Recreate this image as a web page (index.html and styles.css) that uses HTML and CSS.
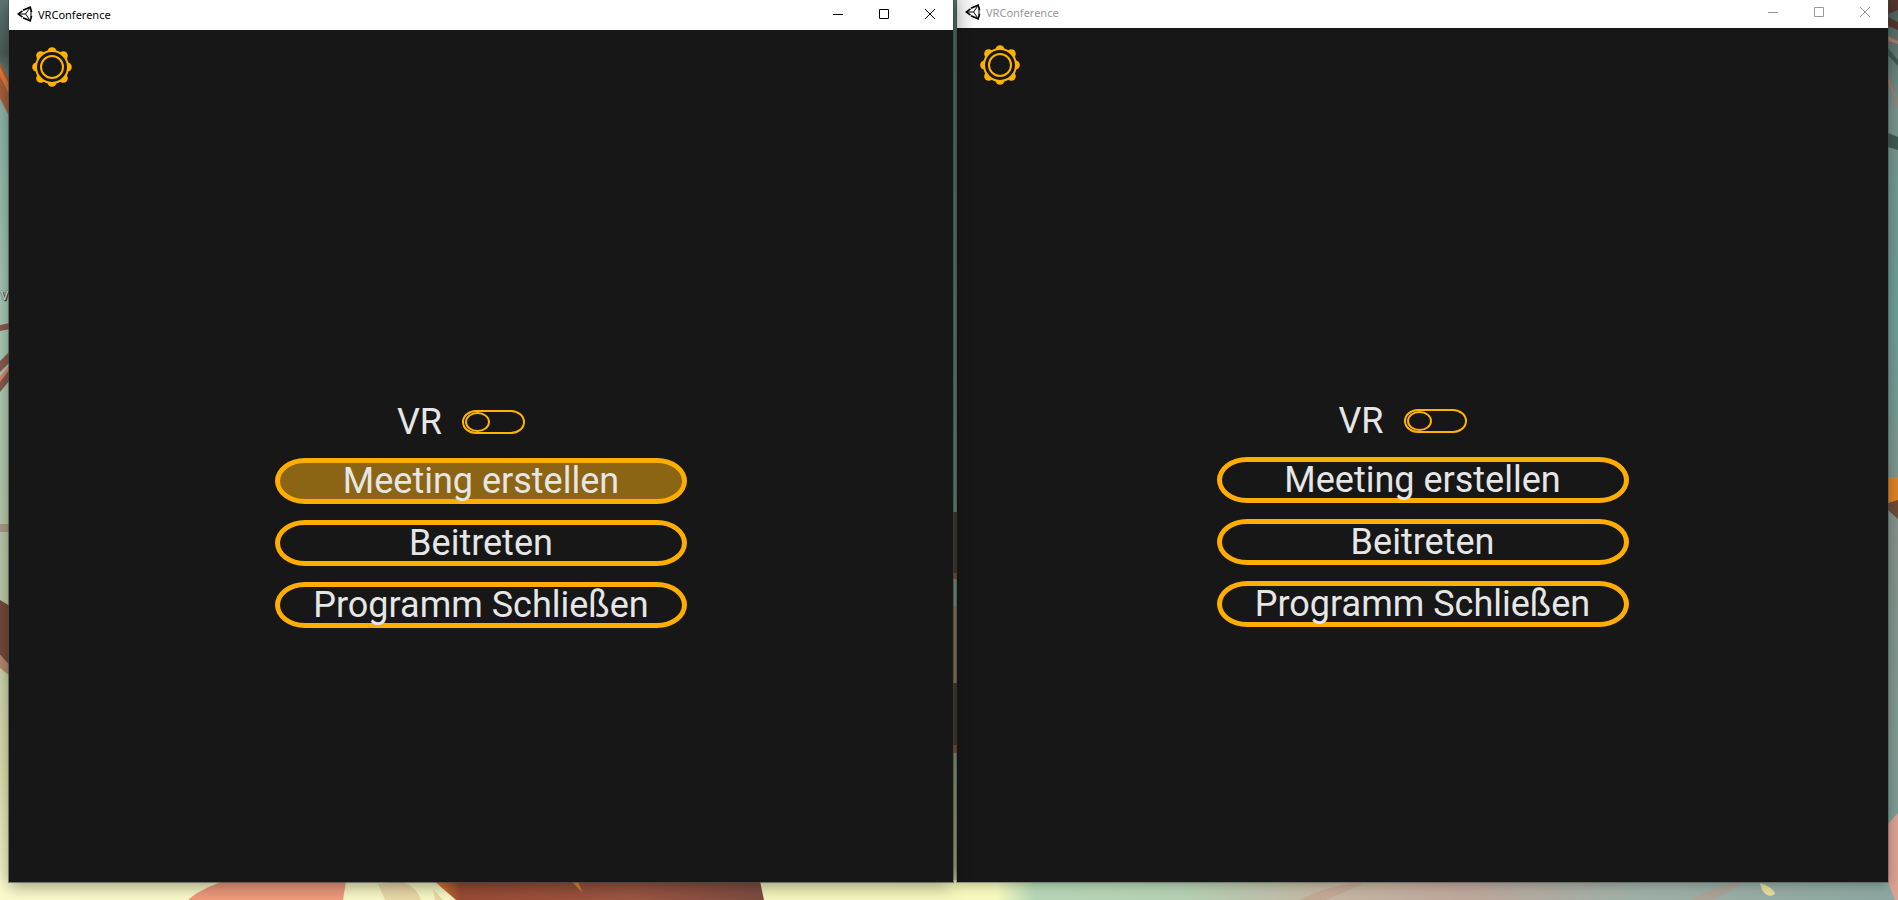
FILE: index.html
```html
<!DOCTYPE html>
<html lang="de">
<head>
<meta charset="utf-8">
<title>VRConference</title>
<link rel="stylesheet" href="styles.css">
</head>
<body>
<svg class="wallpaper" viewBox="0 0 1898 900" preserveAspectRatio="none" aria-hidden="true">
  <defs>
    <linearGradient id="skyLeft" x1="0" y1="0" x2="0" y2="1">
      <stop offset="0" stop-color="#5d7772"/><stop offset="0.06" stop-color="#4d5d58"/>
      <stop offset="0.12" stop-color="#8fb5aa"/><stop offset="0.35" stop-color="#a9cbb5"/>
      <stop offset="0.65" stop-color="#bdcbaa"/><stop offset="0.85" stop-color="#dfdfb0"/>
      <stop offset="1" stop-color="#fbfbce"/>
    </linearGradient>
    <linearGradient id="skyMid" x1="0" y1="0" x2="0" y2="1">
      <stop offset="0" stop-color="#56776f"/><stop offset="0.5" stop-color="#6f8f83"/>
      <stop offset="0.83" stop-color="#8c9c7f"/><stop offset="0.96" stop-color="#b5b184"/>
      <stop offset="1" stop-color="#f4f5c0"/>
    </linearGradient>
    <linearGradient id="skyRight" x1="0" y1="0" x2="0" y2="1">
      <stop offset="0" stop-color="#4a5c58"/><stop offset="0.12" stop-color="#76908a"/>
      <stop offset="0.35" stop-color="#6b9d96"/><stop offset="0.6" stop-color="#83908a"/>
      <stop offset="0.9" stop-color="#7c9c93"/><stop offset="1" stop-color="#a9a79b"/>
    </linearGradient>
    <linearGradient id="ground" x1="0" y1="0" x2="1" y2="0">
      <stop offset="0" stop-color="#fbfbce"/><stop offset="0.525" stop-color="#f6f8bd"/>
      <stop offset="0.545" stop-color="#b5d6b5"/><stop offset="0.62" stop-color="#b4d0b4"/>
      <stop offset="0.7" stop-color="#c3b6a1"/><stop offset="0.77" stop-color="#bea69b"/>
      <stop offset="0.86" stop-color="#9fb0a6"/><stop offset="1" stop-color="#8aa7a0"/>
    </linearGradient>
    <linearGradient id="trunk" x1="0" y1="0" x2="1" y2="0">
      <stop offset="0" stop-color="#ee8434"/><stop offset="0.08" stop-color="#9b4c35"/>
      <stop offset="0.6" stop-color="#9c5643"/><stop offset="1" stop-color="#7e4e41"/>
    </linearGradient>
  </defs>
  <rect width="20" height="900" fill="url(#skyLeft)"/>
  <rect x="940" width="30" height="900" fill="url(#skyMid)"/>
  <rect x="1880" width="18" height="900" fill="url(#skyRight)"/>
  <rect y="880" width="1898" height="20" fill="url(#ground)"/>
  <path d="M0 62 10 80V118L0 98Z" fill="#a85f3d"/>
  <path d="M0 67 10 86V96L0 76Z" fill="#e47b38"/>
  <path d="M0 325 10 323V329L0 331ZM0 361 10 351V362L0 372ZM0 379 10 369V380L0 392Z" fill="#875a4b"/>
  <path d="M0 376 10 365V369L0 382Z" fill="#d58972"/>
  <path d="M0 524H10V532H0Z" fill="#ac9c83"/>
  <path d="M0 600 10 606V666L0 655Z" fill="#76493b"/>
  <path d="M0 655 10 666V676L0 668Z" fill="#b58a6c"/>
  <path d="M950 512H960V578H950ZM950 683H960V752H950Z" fill="#483b34"/>
  <path d="M950 578H960V606H950Z" fill="#839b8b"/>
  <path d="M950 606H960V683H950Z" fill="#9a8164"/>
  <path d="M950 573H960V579H950ZM950 745H960V753H950Z" fill="#8b5739"/>
  <path d="M1888 0H1898V10L1888 14ZM1888 17 1898 22V30L1888 26Z" fill="#4f352b"/>
  <path d="M1888 36 1898 41V44L1888 41ZM1888 76 1898 104V110L1888 82Z" fill="#a87968"/>
  <path d="M1888 48 1898 60V66L1888 55ZM1888 133 1898 137V150L1888 147Z" fill="#3f5751"/>
  <path d="M1888 477H1898V501L1888 503Z" fill="#dc8126"/>
  <path d="M1888 503 1898 500V519L1888 510Z" fill="#6c4a35"/>
  <path d="M1888 824 1898 813V900H1895L1888 882Z" fill="#dca193"/>
  <path d="M188 900C199 890 211 886 224 881H346L343 900Z" fill="#f09c7c"/>
  <path d="M385 900 378 884 402 881Q418 888 421 900ZM435 900 433 889 443 900Z" fill="#d9ac7e" opacity=".4"/>
  <path d="M434 881H760L764 900H456Z" fill="url(#trunk)"/>
  <path d="M571 881H578L582 892Z" fill="#e28b31"/>
  <path d="M1300 900Q1335 882 1363 884L1326 900ZM1690 900Q1714 885 1745 882L1714 900Z" fill="#c19183" opacity=".4"/>
  <path d="M1760 883Q1773 887 1775 894Q1768 899 1762 890Z" fill="#e5dc9d"/>
</svg>
<span class="desktop-label">V</span>

<main class="desktop">
  <section class="window window-active">
    <header class="titlebar">
      <svg class="app-icon" viewBox="0 0 16 16" aria-hidden="true"><path d="M5.500 4.800 1.200 8 5.500 11.200M6 4.300 13.200 1.200 14.600 6M6 11.700 13.200 14.800 14.600 10" fill="none" stroke="currentColor" stroke-width="1.600"/><path d="M2 8H8.500L12.500 2.500M8.500 8 12.500 13.500M14 5V11" fill="none" stroke="currentColor"/></svg>
      <h1 class="title">VRConference</h1>
      <button class="win-btn" type="button" aria-label="Minimieren"><svg viewBox="0 0 10 10"><path d="M0 5.5H10"/></svg></button>
      <button class="win-btn" type="button" aria-label="Maximieren"><svg viewBox="0 0 10 10"><path d="M.5.5H9.5V9.5H.5Z"/></svg></button>
      <button class="win-btn" type="button" aria-label="Schließen"><svg viewBox="0 0 10 10"><path d="M0 0 10 10M10 0 0 10"/></svg></button>
    </header>
    <div class="client">
      <button class="settings" type="button" aria-label="Einstellungen">
        <svg viewBox="-20 -20 40 40"><g class="teeth"><circle cy="-15.3" r="4.500"/><circle cy="15.3" r="4.500"/><circle cx="-15.3" r="4.500"/><circle cx="15.3" r="4.500"/><circle cx="-11.3" cy="-11.3" r="4.500"/><circle cx="11.3" cy="-11.3" r="4.500"/><circle cx="-11.3" cy="11.3" r="4.500"/><circle cx="11.3" cy="11.3" r="4.500"/></g><circle class="rim" r="16"/><circle class="hub" r="11"/></svg>
      </button>
      <div class="menu">
        <label class="vr">VR<input class="toggle" type="checkbox"></label>
        <button class="pill pill-hover" type="button">Meeting erstellen</button>
        <button class="pill" type="button">Beitreten</button>
        <button class="pill" type="button">Programm Schließen</button>
      </div>
    </div>
  </section>

  <section class="window window-inactive">
    <header class="titlebar">
      <svg class="app-icon" viewBox="0 0 16 16" aria-hidden="true"><path d="M5.500 4.800 1.200 8 5.500 11.200M6 4.300 13.200 1.200 14.600 6M6 11.700 13.200 14.800 14.600 10" fill="none" stroke="currentColor" stroke-width="1.600"/><path d="M2 8H8.500L12.500 2.500M8.500 8 12.500 13.500M14 5V11" fill="none" stroke="currentColor"/></svg>
      <h1 class="title">VRConference</h1>
      <button class="win-btn" type="button" aria-label="Minimieren"><svg viewBox="0 0 10 10"><path d="M0 5.5H10"/></svg></button>
      <button class="win-btn" type="button" aria-label="Maximieren"><svg viewBox="0 0 10 10"><path d="M.5.5H9.5V9.5H.5Z"/></svg></button>
      <button class="win-btn" type="button" aria-label="Schließen"><svg viewBox="0 0 10 10"><path d="M0 0 10 10M10 0 0 10"/></svg></button>
    </header>
    <div class="client">
      <button class="settings" type="button" aria-label="Einstellungen">
        <svg viewBox="-20 -20 40 40"><g class="teeth"><circle cy="-15.3" r="4.500"/><circle cy="15.3" r="4.500"/><circle cx="-15.3" r="4.500"/><circle cx="15.3" r="4.500"/><circle cx="-11.3" cy="-11.3" r="4.500"/><circle cx="11.3" cy="-11.3" r="4.500"/><circle cx="-11.3" cy="11.3" r="4.500"/><circle cx="11.3" cy="11.3" r="4.500"/></g><circle class="rim" r="16"/><circle class="hub" r="11"/></svg>
      </button>
      <div class="menu">
        <label class="vr">VR<input class="toggle" type="checkbox"></label>
        <button class="pill" type="button">Meeting erstellen</button>
        <button class="pill" type="button">Beitreten</button>
        <button class="pill" type="button">Programm Schließen</button>
      </div>
    </div>
  </section>
</main>
</body>
</html>
```
FILE: styles.css
```css
*,
*::before,
*::after { box-sizing: border-box; }

body {
  margin: 0;
  overflow: hidden;
  background: #fbfbce;
  font-family: Roboto, "Liberation Sans", sans-serif;
}

.wallpaper {
  position: absolute;
  inset: 0;
  width: 100%;
  height: 100%;
}

.desktop-label {
  position: absolute;
  left: 1px;
  top: 288px;
  color: #fff;
  font: 12px/16px "Open Sans", sans-serif;
  text-shadow: 0 0 2px #000, 1px 1px 1px #000;
}

.desktop {
  position: relative;
  display: grid;
  grid-template-columns: 944fr 931fr;
  gap: 4px;
  height: 100vh;
  padding: 0 10px 18px 9px;
}

.window {
  display: flex;
  flex-direction: column;
  min-width: 0;
  background: #171717;
}

.window-active {
  z-index: 1;
  box-shadow: 0 0 0 1px rgba(60, 75, 70, .6), 0 4px 16px rgba(0, 0, 0, .4);
}

.window-inactive {
  box-shadow: 0 0 0 1px rgba(60, 75, 70, .4), 0 2px 12px rgba(0, 0, 0, .3);
}

.titlebar {
  display: flex;
  align-items: center;
  height: 30px;
  padding: 0 0 2px 8px;
  background: #fff;
  color: #000;
}

.window-inactive .titlebar {
  height: 28px;
  padding-bottom: 4px;
  background: linear-gradient(90deg, #e4e4e4, #fff 20px);
}

.app-icon {
  width: 16px;
  height: 16px;
}

.title {
  flex: 1;
  margin: 0 0 0 5px;
  padding-top: 2px;
  font: 11px/16px "Noto Sans", "Open Sans", sans-serif;
}

.window-inactive .title,
.window-inactive .win-btn { color: #999; }

.win-btn {
  display: grid;
  place-items: center;
  width: 46px;
  height: 24px;
  padding: 0;
  border: 0;
  background: none;
  color: #000;
}

.win-btn svg {
  width: 10px;
  height: 10px;
  fill: none;
  stroke: currentColor;
}

.client {
  display: flex;
  flex: 1;
  flex-direction: column;
  align-items: center;
}

/* The free height is split 14:11 above and below the menu. */
.client::before {
  content: "";
  order: 1;
  flex: 14;
}

.menu { order: 2; }

.client::after {
  content: "";
  order: 3;
  flex: 11;
}

.settings {
  align-self: flex-start;
  width: 40px;
  height: 40px;
  margin: 17px 0 0 23px;
  padding: 0;
  border: 0;
  background: none;
}

.settings svg {
  display: block;
  width: 40px;
  height: 40px;
}

.teeth { fill: #ffb300; }

.rim,
.hub {
  fill: #171717;
  stroke: #ffb300;
  stroke-width: 2;
}

.menu {
  display: flex;
  flex-direction: column;
  align-items: center;
  width: 412px;
  max-width: 100%;
}

.vr {
  display: flex;
  align-items: center;
  gap: 20px;
  height: 24px;
  margin-bottom: 24px;
  padding-right: 40px;
  color: #e6e6e6;
  font-size: 36px;
}

.toggle {
  appearance: none;
  display: flex;
  align-items: center;
  width: 63px;
  height: 24px;
  margin: 0;
  padding-left: 1px;
  border: 2px solid #ffb300;
  border-radius: 14px / 12px;
}

.toggle::before {
  content: "";
  width: 25px;
  height: 20px;
  border: 2px solid #ffb300;
  border-radius: 50%;
}

.pill {
  width: 100%;
  height: 46px;
  margin-bottom: 16px;
  padding: 0;
  border: 5px solid #ffae00;
  border-radius: 30px / 23px;
  background: none;
  color: #e6e6e6;
  font: 36px/36px Roboto, "Liberation Sans", sans-serif;
  white-space: nowrap;
}

.pill:last-child { margin-bottom: 0; }
.pill-hover { background: #8b6414; }
```
